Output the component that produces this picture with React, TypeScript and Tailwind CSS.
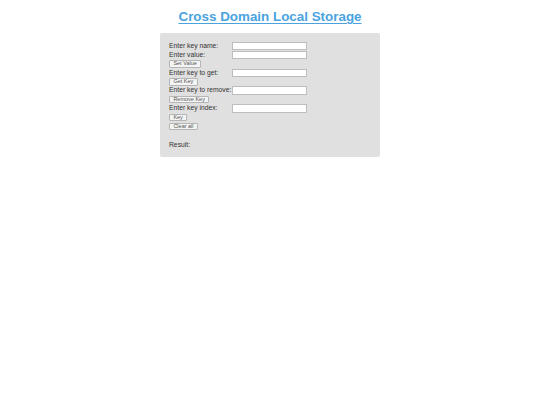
import React from "react";

const Field = ({ label }: { label: string }) => (
  <div className="flex h-[8.9px] items-center">
    <span className="w-[63.3px] shrink-0 whitespace-nowrap leading-none">{label}</span>
    <input type="text" className="h-[8.5px] w-[74.4px] border border-[#bdbdbd] bg-white outline-none" />
  </div>
);

const Btn = ({ text }: { text: string }) => (
  <div className="flex h-[8.9px] items-center">
    <button className="h-[7.5px] rounded-[1px] border border-[#b5b5b5] bg-[#f4f4f4] px-[3.4px] text-[5.5px] leading-none text-[#555]">
      {text}
    </button>
  </div>
);

export default function App() {
  return (
    <div className="min-h-[405px] w-full bg-white font-['Liberation_Sans',Arial,sans-serif]">
      <h1 className="pt-[9px] text-center text-[13.4px] font-bold leading-[15px] text-[#4aa3df] underline decoration-[1px] underline-offset-[2px]">
        Cross Domain Local Storage
      </h1>
      <div className="mx-auto mt-[9px] h-[124px] w-[220px] rounded-[2px] bg-[#e0e0e0] pl-[9px] pt-[8.8px] text-[6.75px] text-[#333]">
        <Field label="Enter key name:" />
        <Field label="Enter value:" />
        <Btn text="Set Value" />
        <Field label="Enter key to get:" />
        <Btn text="Get Key" />
        <Field label="Enter key to remove:" />
        <Btn text="Remove Key" />
        <Field label="Enter key index:" />
        <Btn text="Key" />
        <Btn text="Clear all" />
        <div className="mt-[11.5px] leading-none">Result:</div>
      </div>
    </div>
  );
}
